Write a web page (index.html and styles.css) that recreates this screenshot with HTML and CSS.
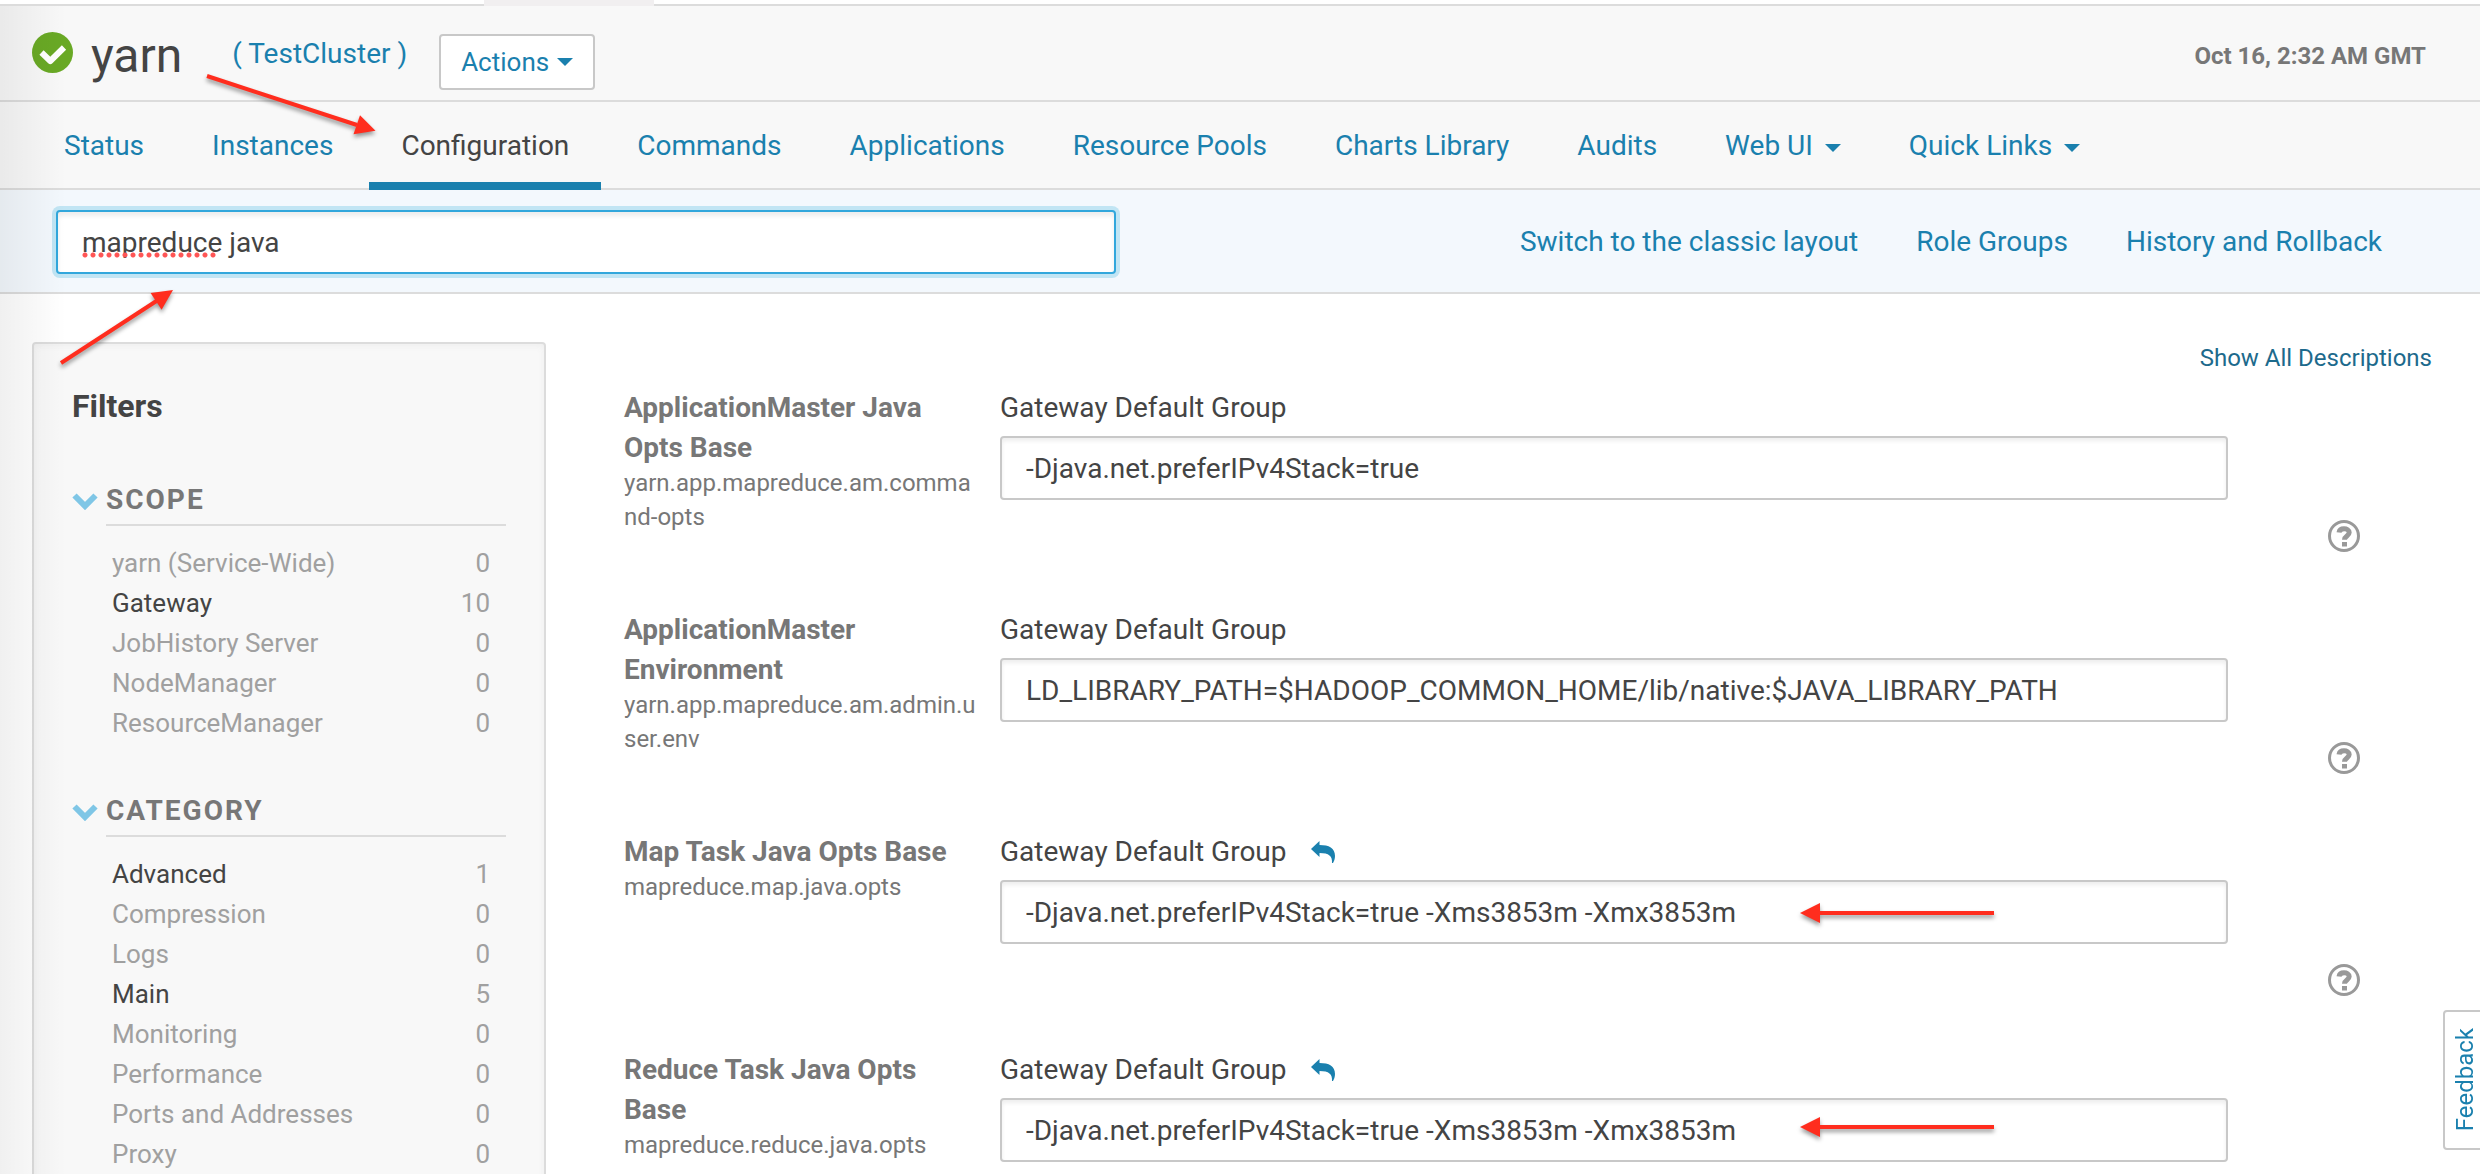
FILE: index.html
```html
<!DOCTYPE html>
<html lang="en">
<head>
<meta charset="utf-8">
<title>yarn - Configuration</title>
<link rel="stylesheet" href="styles.css">
</head>
<body>
<div class="top-strip"><div class="top-strip-active"></div></div>

<header class="service-header">
  <svg class="status-icon" viewBox="0 0 41 41" aria-label="Good health">
    <circle cx="20.500" cy="20.500" r="20.500" fill="#69a925"/>
    <path d="M9.500 20.500L18.300 29L32 15.500" fill="none" stroke="#fff" stroke-width="6" stroke-linejoin="round"/>
  </svg>
  <h1 class="service-name">yarn</h1>
  <a class="cluster-link" href="#">( TestCluster )</a>
  <button class="actions-button" type="button">Actions<span class="caret"></span></button>
  <time class="server-time">Oct 16, 2:32 AM GMT</time>
</header>

<nav class="tabs">
  <a class="tab" href="#">Status</a>
  <a class="tab" href="#">Instances</a>
  <a class="tab tab-active" href="#">Configuration</a>
  <a class="tab" href="#">Commands</a>
  <a class="tab" href="#">Applications</a>
  <a class="tab" href="#">Resource Pools</a>
  <a class="tab" href="#">Charts Library</a>
  <a class="tab" href="#">Audits</a>
  <a class="tab" href="#">Web UI<span class="caret caret-tab"></span></a>
  <a class="tab" href="#">Quick Links<span class="caret caret-tab"></span></a>
</nav>

<section class="search-bar">
  <div class="search-field">
    <input class="search-input" type="text" value="mapreduce java" aria-label="Search" spellcheck="false">
    <span class="spelling-mark"></span>
  </div>
  <div class="search-links">
    <a href="#">Switch to the classic layout</a>
    <a href="#">Role Groups</a>
    <a href="#">History and Rollback</a>
  </div>
</section>

<main class="content">
  <aside class="filters">
    <h2 class="filters-title">Filters</h2>
    <section class="filter-group">
      <svg class="chevron" viewBox="0 0 26 18"><path d="M2.500 3.500L13 14L23.500 3.500" fill="none" stroke="#7fc6e6" stroke-width="6"/></svg>
      <h3 class="filter-heading">SCOPE</h3>
      <ul class="filter-list">
        <li><span>yarn (Service-Wide)</span><span>0</span></li>
        <li><span class="has-matches">Gateway</span><span>10</span></li>
        <li><span>JobHistory Server</span><span>0</span></li>
        <li><span>NodeManager</span><span>0</span></li>
        <li><span>ResourceManager</span><span>0</span></li>
      </ul>
    </section>
    <section class="filter-group">
      <svg class="chevron" viewBox="0 0 26 18"><path d="M2.500 3.500L13 14L23.500 3.500" fill="none" stroke="#7fc6e6" stroke-width="6"/></svg>
      <h3 class="filter-heading">CATEGORY</h3>
      <ul class="filter-list">
        <li><span class="has-matches">Advanced</span><span>1</span></li>
        <li><span>Compression</span><span>0</span></li>
        <li><span>Logs</span><span>0</span></li>
        <li><span class="has-matches">Main</span><span>5</span></li>
        <li><span>Monitoring</span><span>0</span></li>
        <li><span>Performance</span><span>0</span></li>
        <li><span>Ports and Addresses</span><span>0</span></li>
        <li><span>Proxy</span><span>0</span></li>
      </ul>
    </section>
  </aside>

  <div class="settings">
    <a class="show-descriptions" href="#">Show All Descriptions</a>

    <section class="setting">
      <div class="setting-name"><h4>ApplicationMaster Java Opts Base</h4><p>yarn.app.mapreduce.am.command-opts</p></div>
      <div class="setting-value">
        <label for="am-opts">Gateway Default Group</label>
        <input id="am-opts" type="text" value="-Djava.net.preferIPv4Stack=true">
      </div>
      <button class="help" type="button" aria-label="Help"><svg viewBox="0 0 32 32"><circle cx="16" cy="16" r="14.500"/><path d="M11 12.500C11.400 9.800 13.300 8.700 16 8.700s5.200 1.400 5.200 3.900c0 3.400-4.700 3.400-4.700 7.100"/><path d="M14 22h5v4.500h-5z" class="help-dot"/></svg></button>
    </section>

    <section class="setting">
      <div class="setting-name"><h4>ApplicationMaster Environment</h4><p>yarn.app.mapreduce.am.admin.user.env</p></div>
      <div class="setting-value">
        <label for="am-env">Gateway Default Group</label>
        <input id="am-env" type="text" value="LD_LIBRARY_PATH=$HADOOP_COMMON_HOME/lib/native:$JAVA_LIBRARY_PATH">
      </div>
      <button class="help" type="button" aria-label="Help"><svg viewBox="0 0 32 32"><circle cx="16" cy="16" r="14.500"/><path d="M11 12.500C11.400 9.800 13.300 8.700 16 8.700s5.200 1.400 5.200 3.900c0 3.400-4.700 3.400-4.700 7.100"/><path d="M14 22h5v4.500h-5z" class="help-dot"/></svg></button>
    </section>

    <section class="setting">
      <div class="setting-name"><h4>Map Task Java Opts Base</h4><p>mapreduce.map.java.opts</p></div>
      <div class="setting-value">
        <div class="label-row">
          <label for="map-opts">Gateway Default Group</label>
          <button class="reset" type="button" aria-label="Reset to default"><svg viewBox="0 0 24 22"><path d="M0 8L8.500 0V4C18 4 24 7 24 15C24 18 23 20 22 22H21C21.500 15 18 12 8.500 12V16Z"/></svg></button>
        </div>
        <input id="map-opts" type="text" value="-Djava.net.preferIPv4Stack=true -Xms3853m -Xmx3853m">
        <svg class="arrow arrow-field" viewBox="0 0 200 40"><path d="M20 17H194V21H20Z"/><path d="M0 19L20 9V29Z"/></svg>
      </div>
      <button class="help" type="button" aria-label="Help"><svg viewBox="0 0 32 32"><circle cx="16" cy="16" r="14.500"/><path d="M11 12.500C11.400 9.800 13.300 8.700 16 8.700s5.200 1.400 5.200 3.900c0 3.400-4.700 3.400-4.700 7.100"/><path d="M14 22h5v4.500h-5z" class="help-dot"/></svg></button>
    </section>

    <section class="setting">
      <div class="setting-name"><h4>Reduce Task Java Opts Base</h4><p>mapreduce.reduce.java.opts</p></div>
      <div class="setting-value">
        <div class="label-row">
          <label for="reduce-opts">Gateway Default Group</label>
          <button class="reset" type="button" aria-label="Reset to default"><svg viewBox="0 0 24 22"><path d="M0 8L8.500 0V4C18 4 24 7 24 15C24 18 23 20 22 22H21C21.500 15 18 12 8.500 12V16Z"/></svg></button>
        </div>
        <input id="reduce-opts" type="text" value="-Djava.net.preferIPv4Stack=true -Xms3853m -Xmx3853m">
        <svg class="arrow arrow-field" viewBox="0 0 200 40"><path d="M20 13H194V17H20Z"/><path d="M0 15L20 5V25Z"/></svg>
      </div>
    </section>
  </div>
</main>

<div class="edge-shade"></div>
<button class="feedback" type="button"><span>Feedback</span></button>
<svg class="arrow arrow-tab" viewBox="0 0 180 70"><path d="M7 6L157 55" class="shaft"/><path d="M175.500 60.700L160 45.300L153.500 64.300Z"/></svg>
<svg class="arrow arrow-search" viewBox="0 0 130 90"><path d="M11 83L108 20" class="shaft"/><path d="M123 10L100.600 13L111.600 29.700Z"/></svg>
</body>
</html>
```
FILE: styles.css
```css
* { box-sizing: border-box; }

html { height: 100%; overflow: hidden; }

body {
  position: relative;
  height: 100%;
  margin: 0;
  overflow: hidden;
  background: #fff;
  color: #444;
  font: 28px/40px Roboto, "Liberation Sans", sans-serif;
}

a { color: #1a80ae; text-decoration: none; }
h1, h2, h3, h4, p, ul { margin: 0; padding: 0; }
ul { list-style: none; }
svg { display: block; }
button, input { font: inherit; color: inherit; }

/* Bottom edge of the global navigation */
.top-strip {
  display: flex;
  height: 6px;
  padding-left: 484px;
  border-bottom: 2px solid #dcdcdc;
}
.top-strip-active { width: 170px; height: 6px; background: #f1eff0; }

/* Service header */
.service-header {
  display: flex;
  align-items: flex-start;
  height: 96px;
  padding: 26px 54px 0 32px;
  border-bottom: 2px solid #dcdcdc;
  background: #f8f8f8;
}
.status-icon { width: 41px; height: 41px; }
.service-name {
  margin-left: 18px;
  font-size: 48px;
  font-weight: 400;
  line-height: 48px;
}
.cluster-link { margin: 2px 32px 0 50px; }
.actions-button {
  display: flex;
  align-items: center;
  gap: 8px;
  height: 56px;
  margin-top: 2px;
  padding: 0 20px;
  border: 2px solid #c8c8c8;
  border-radius: 4px;
  background: #fff;
  color: #1a80ae;
  font-size: 26px;
}
.caret {
  display: inline-block;
  border: 8px solid transparent;
  border-top-color: currentColor;
  border-bottom: 0;
}
.caret-tab { margin-left: 12px; vertical-align: 3px; }
.server-time {
  margin: 4px 0 0 auto;
  color: #777;
  font-size: 24px;
  font-weight: 700;
}

/* Tabs */
.tabs {
  display: flex;
  gap: 4px;
  height: 88px;
  padding-left: 32px;
  border-bottom: 2px solid #dcdcdc;
  background: #f8f8f8;
}
.tab { height: 88px; padding: 24px 32px 0; }
.tab-active { border-bottom: 8px solid #1a80ae; color: #444; }

/* Search */
.search-bar {
  display: flex;
  align-items: center;
  justify-content: space-between;
  height: 104px;
  padding: 2px 98px 0 56px;
  border-bottom: 2px solid #dcdcdc;
  background: #f3f8fd;
}
.search-field { position: relative; flex: 0 1 1060px; }
.search-input {
  display: block;
  width: 100%;
  height: 64px;
  padding: 0 24px;
  border: 2px solid #32a7dc;
  border-radius: 4px;
  outline: 0;
  background: #fff;
  box-shadow: 0 0 0 4px #c1e5f4, inset 0 4px 4px #eee;
}
.spelling-mark {
  position: absolute;
  top: 42px;
  left: 26px;
  width: 136px;
  height: 6px;
  background: radial-gradient(circle at 3px 3px, #f55 2px, transparent 3px) 0 0 / 8px 6px;
}
.search-links { display: flex; gap: 58px; }

/* Page body */
.content { display: flex; align-items: flex-start; padding: 48px 48px 0 32px; }

.filters {
  flex: 0 0 514px;
  min-height: 900px;
  padding: 42px 38px;
  border: 2px solid #dcdcdc;
  border-radius: 4px;
  background: #f8f8f8;
  box-shadow: inset 0 2px 6px #eee;
}
.filters-title { margin-bottom: 54px; font-size: 32px; }
.filter-group {
  display: grid;
  grid-template-columns: 34px 1fr;
  margin-bottom: 48px;
}
.chevron { width: 26px; height: 18px; margin-top: 12px; }
.filter-heading {
  height: 46px;
  border-bottom: 2px solid #dcdcdc;
  color: #777;
  font-size: 28px;
  letter-spacing: 2px;
}
.filter-list {
  grid-column: 2;
  padding: 17px 16px 0 6px;
  color: #a0a0a0;
  font-size: 26px;
}
.filter-list li { display: flex; justify-content: space-between; }
.has-matches { color: #444; }

/* Settings */
.settings { flex: 1; padding-left: 78px; }
.show-descriptions {
  display: block;
  margin: -4px 0 10px;
  color: #1d6a8c;
  font-size: 24px;
  text-align: right;
}
.setting {
  display: grid;
  grid-template-columns: 352px 1fr 32px;
  column-gap: 24px;
  margin-bottom: 54px;
  padding-right: 72px;
}
.setting-name { padding-bottom: 22px; color: #777; }
.setting-name h4 { font-size: 28px; font-weight: 700; }
.setting-name p { margin-top: -2px; font-size: 24px; line-height: 34px; word-break: break-all; }
.setting-value { position: relative; margin-right: 76px; }
.setting-value label { display: block; }
.setting-value input {
  width: 100%;
  height: 64px;
  margin-top: 8px;
  padding: 0 24px;
  border: 2px solid #c8c8c8;
  border-radius: 4px;
  background: #fff;
  box-shadow: inset 0 3px 4px #eee;
}
.label-row { display: flex; align-items: center; gap: 24px; }
.reset, .help { padding: 0; border: 0; background: none; }
.reset svg { width: 24px; height: 22px; fill: #1a80ae; }
.help { align-self: start; padding-top: 132px; }
.help svg { width: 32px; height: 32px; fill: none; stroke: #999; stroke-width: 3; }
.help path { stroke-width: 5; }
.help .help-dot { fill: #999; stroke: none; }

/* Shade along the window's left edge */
.edge-shade {
  position: absolute;
  inset: 6px auto 0 0;
  width: 66px;
  background: linear-gradient(90deg, rgba(0, 0, 0, .06), transparent);
  pointer-events: none;
}

.feedback {
  position: absolute;
  top: 1010px;
  right: -4px;
  width: 41px;
  height: 140px;
  padding: 0;
  border: 2px solid #c8c8c8;
  border-radius: 4px;
  background: #fff;
  color: #1a80ae;
  font-size: 24px;
  line-height: 40px;
}
.feedback span { display: block; writing-mode: vertical-rl; transform: rotate(180deg); }

/* Red pointers over the page */
.arrow {
  position: absolute;
  overflow: visible;
  fill: #ff2d1e;
  filter: drop-shadow(0 3px 2px rgba(0, 0, 0, .4));
  pointer-events: none;
}
.arrow .shaft { stroke: #ff2d1e; stroke-width: 4; }
.arrow-tab { top: 70px; left: 200px; width: 180px; height: 70px; }
.arrow-search { top: 280px; left: 50px; width: 130px; height: 90px; }
.arrow-field { top: 62px; left: 800px; width: 200px; height: 40px; }
```
